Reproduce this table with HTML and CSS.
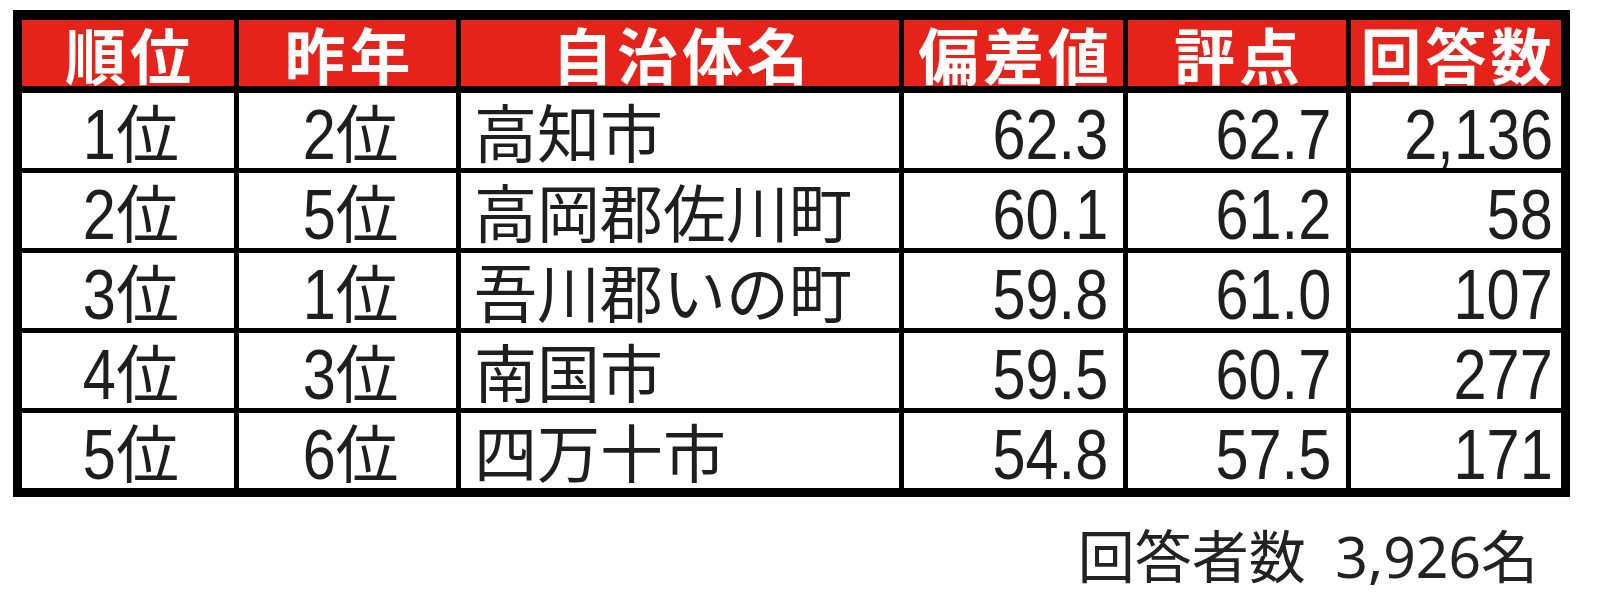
FILE: index.html
```html
<!DOCTYPE html>
<html lang="ja">
<head>
<meta charset="utf-8">
<title>ランキング</title>
<link rel="stylesheet" href="styles.css">
</head>
<body>
<div class="wrap">
  <div class="board">
    <div class="h">順位</div>
    <div class="h">昨年</div>
    <div class="h">自治体名</div>
    <div class="h">偏差値</div>
    <div class="h">評点</div>
    <div class="h">回答数</div>

    <div class="c ctr"><span class="n">1</span>位</div>
    <div class="c ctr"><span class="n">2</span>位</div>
    <div class="c name">高知市</div>
    <div class="c num"><span class="n">62.3</span></div>
    <div class="c num"><span class="n">62.7</span></div>
    <div class="c num last"><span class="n">2,136</span></div>

    <div class="c ctr"><span class="n">2</span>位</div>
    <div class="c ctr"><span class="n">5</span>位</div>
    <div class="c name">高岡郡佐川町</div>
    <div class="c num"><span class="n">60.1</span></div>
    <div class="c num"><span class="n">61.2</span></div>
    <div class="c num last"><span class="n">58</span></div>

    <div class="c ctr"><span class="n">3</span>位</div>
    <div class="c ctr"><span class="n">1</span>位</div>
    <div class="c name">吾川郡いの町</div>
    <div class="c num"><span class="n">59.8</span></div>
    <div class="c num"><span class="n">61.0</span></div>
    <div class="c num last"><span class="n">107</span></div>

    <div class="c ctr"><span class="n">4</span>位</div>
    <div class="c ctr"><span class="n">3</span>位</div>
    <div class="c name">南国市</div>
    <div class="c num"><span class="n">59.5</span></div>
    <div class="c num"><span class="n">60.7</span></div>
    <div class="c num last"><span class="n">277</span></div>

    <div class="c ctr"><span class="n">5</span>位</div>
    <div class="c ctr"><span class="n">6</span>位</div>
    <div class="c name">四万十市</div>
    <div class="c num"><span class="n">54.8</span></div>
    <div class="c num"><span class="n">57.5</span></div>
    <div class="c num last"><span class="n">171</span></div>
  </div>
  <p class="note">回答者数&nbsp;&nbsp;3,926名</p>
</div>
</body>
</html>
```

FILE: styles.css
```css
* { box-sizing: border-box; }

html, body {
  margin: 0;
  padding: 0;
  background: #ffffff;
}

body {
  font-family: "Liberation Sans", "Noto Sans CJK JP", sans-serif;
  color: #1e1e1e;
}

.wrap {
  width: 1557px;
  margin: 10px 0 0 13px;
}

.board {
  display: grid;
  grid-template-columns: 212px 217px 438px 219px 218px 210px;
  grid-template-rows: 68px repeat(5, 75px);
  column-gap: 5px;
  row-gap: 5px;
  padding: 10px 9px 9px 9px;
  background: #000000;
}

.h {
  display: flex;
  align-items: center;
  justify-content: center;
  background: #e5231a;
  border-bottom: 2px solid #000000;
  color: #ffffff;
  font-family: "Noto Sans CJK JP", sans-serif;
  font-weight: 700;
  font-size: 61px;
  line-height: 66px;
  letter-spacing: 4px;
  padding: 2px 0 0 4px;
  white-space: nowrap;
}

.c {
  background: #ffffff;
  display: flex;
  align-items: center;
  font-size: 63px;
  line-height: 62px;
  padding-top: 8px;
  white-space: nowrap;
}

.ctr { justify-content: center; }

.name {
  justify-content: flex-start;
  padding-left: 13px;
}

.num {
  justify-content: flex-end;
  padding-right: 15px;
}

.num.last { padding-right: 8px; }

.n {
  display: inline-block;
  font-family: "Liberation Sans", sans-serif;
  font-size: 70px;
  transform: scaleX(0.85);
  transform-origin: 100% 50%;
}

.note {
  margin: 31px 0 0 0;
  padding-right: 32px;
  text-align: right;
  font-family: "Noto Sans", "Noto Sans CJK JP", sans-serif;
  font-size: 57px;
  line-height: 57px;
  color: #222222;
}
```
